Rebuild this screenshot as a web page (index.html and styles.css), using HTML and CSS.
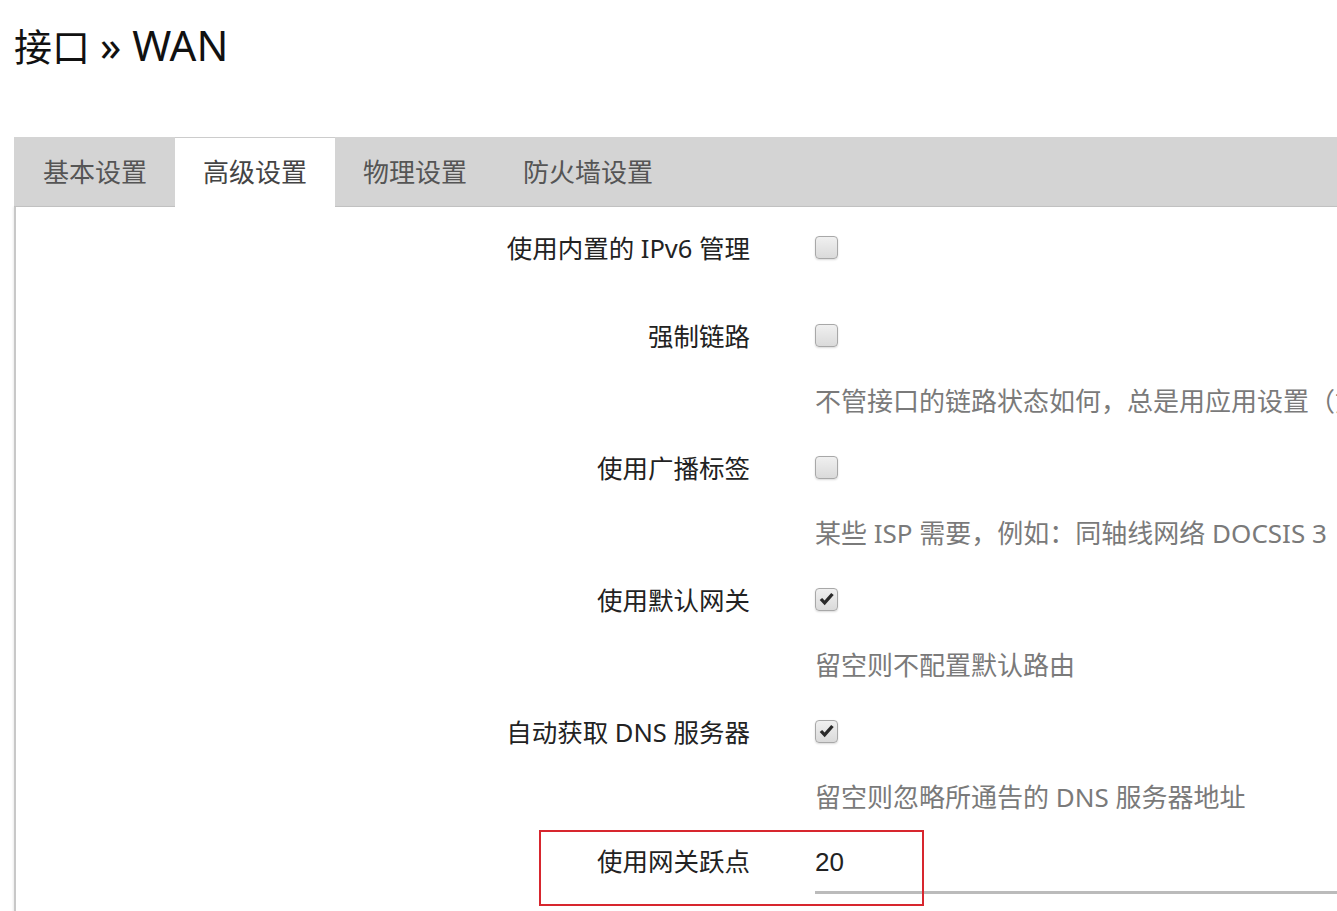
FILE: index.html
```html
<!DOCTYPE html>
<html>
<head lang="zh-CN">
    <meta charset="UTF-8">
    <title>接口 - WAN</title>
    <link rel="stylesheet" href="styles.css">
</head>
<body>
    <div id="page">
        <h2 class="title">接口 <span class="latin">» WAN</span></h2>
        <ul class="tabs">
            <li>基本设置</li>
            <li class="active">高级设置</li>
            <li>物理设置</li>
            <li>防火墙设置</li>
        </ul>
        <div class="panel">
            <div class="row">
                <label class="label">使用内置的 IPv6 管理</label>
                <div class="field">
                    <span class="check"></span>
                </div>
            </div>
            <div class="row">
                <label class="label">强制链路</label>
                <div class="field">
                    <span class="check"></span>
                    <div class="desc">不管接口的链路状态如何，总是用应用设置（如 IP 地址、路由、防火墙规则）</div>
                </div>
            </div>
            <div class="row">
                <label class="label">使用广播标签</label>
                <div class="field">
                    <span class="check"></span>
                    <div class="desc">某些 ISP 需要，例如：同轴线网络 DOCSIS 3</div>
                </div>
            </div>
            <div class="row">
                <label class="label">使用默认网关</label>
                <div class="field">
                    <span class="check checked">
                        <svg viewBox="0 0 16 16" width="17" height="17"><path d="M1.6 8.5 L6.3 13.4 L14.8 3.8 L12.4 1.9 L6.2 9 L3.9 6.5 Z" fill="#2a2a2a"/></svg>
                    </span>
                    <div class="desc">留空则不配置默认路由</div>
                </div>
            </div>
            <div class="row">
                <label class="label">自动获取 DNS 服务器</label>
                <div class="field">
                    <span class="check checked">
                        <svg viewBox="0 0 16 16" width="17" height="17"><path d="M1.6 8.5 L6.3 13.4 L14.8 3.8 L12.4 1.9 L6.2 9 L3.9 6.5 Z" fill="#2a2a2a"/></svg>
                    </span>
                    <div class="desc">留空则忽略所通告的 DNS 服务器地址</div>
                </div>
            </div>
            <div class="row last">
                <label class="label">使用网关跃点</label>
                <div class="field">
                    <input class="text" type="text" value="20">
                </div>
                <span class="mark"></span>
            </div>
        </div>
    </div>
</body>
</html>
```

FILE: styles.css
```css
*{
    margin: 0;
    padding: 0;
    box-sizing: border-box;
}
html,body{
    overflow: hidden;
    background: #fff;
}
body{
    font-family: "Noto Sans", "Noto Sans CJK SC", sans-serif;
    color: #222;
}
li{
    list-style: none;
}
#page{
    width: 1700px;
    padding-left: 14px;
}
.title{
    font-size: 38px;
    font-weight: normal;
    line-height: 46px;
    padding-top: 22px;
    margin-bottom: 68px;
    color: #111;
}
.title .latin{
    font-size: 42px;
}
.tabs{
    display: flex;
    height: 70px;
    background: #d4d4d4;
    border-bottom: 1px solid #c6c6c6;
}
.tabs li{
    padding: 2px 28px 0 28px;
    font-size: 26px;
    line-height: 67px;
    color: #555;
}
.tabs li:first-child{
    padding-left: 29px;
}
.tabs .active{
    background: #fff;
    border-top: 1px solid #ccc;
    padding-top: 1px;
    height: 70px;
    color: #444;
}
.panel{
    border-left: 2px solid #c8c8c8;
    box-shadow: -1px 0 2px rgba(0,0,0,0.08);
    height: 720px;
}
.row{
    display: grid;
    grid-template-columns: 734px 1fr;
    column-gap: 65px;
    padding: 19px 0 25px;
    position: relative;
}
.label{
    text-align: right;
    font-size: 25.5px;
    line-height: 44px;
    color: #222;
}
.field{
    font-size: 26px;
    line-height: 44px;
}
.check{
    display: inline-block;
    vertical-align: middle;
    width: 23px;
    height: 23px;
    margin-top: -8px;
    border: 1px solid #a8a8a8;
    border-radius: 4px;
    background: linear-gradient(#f0f0f0, #dadada);
    box-shadow: 0 1px 2px rgba(0,0,0,0.15);
    position: relative;
}
.check svg{
    position: absolute;
    left: 2px;
    top: 2px;
}
.desc{
    margin-top: 21px;
    margin-bottom: -21px;
    font-size: 26px;
    line-height: 44px;
    color: #7a7a7a;
    white-space: nowrap;
}
.row.last{
    padding-top: 16px;
}
.text{
    display: block;
    width: 100%;
    height: 55px;
    border: none;
    border-bottom: 3px solid #bbb;
    outline: none;
    font-family: "Liberation Sans", Arial, sans-serif;
    font-size: 26px;
    color: #222;
    padding-bottom: 6px;
    background: transparent;
}
.mark{
    position: absolute;
    left: 523px;
    top: 7px;
    width: 385px;
    height: 76px;
    border: 2px solid #d7262e;
}
```
